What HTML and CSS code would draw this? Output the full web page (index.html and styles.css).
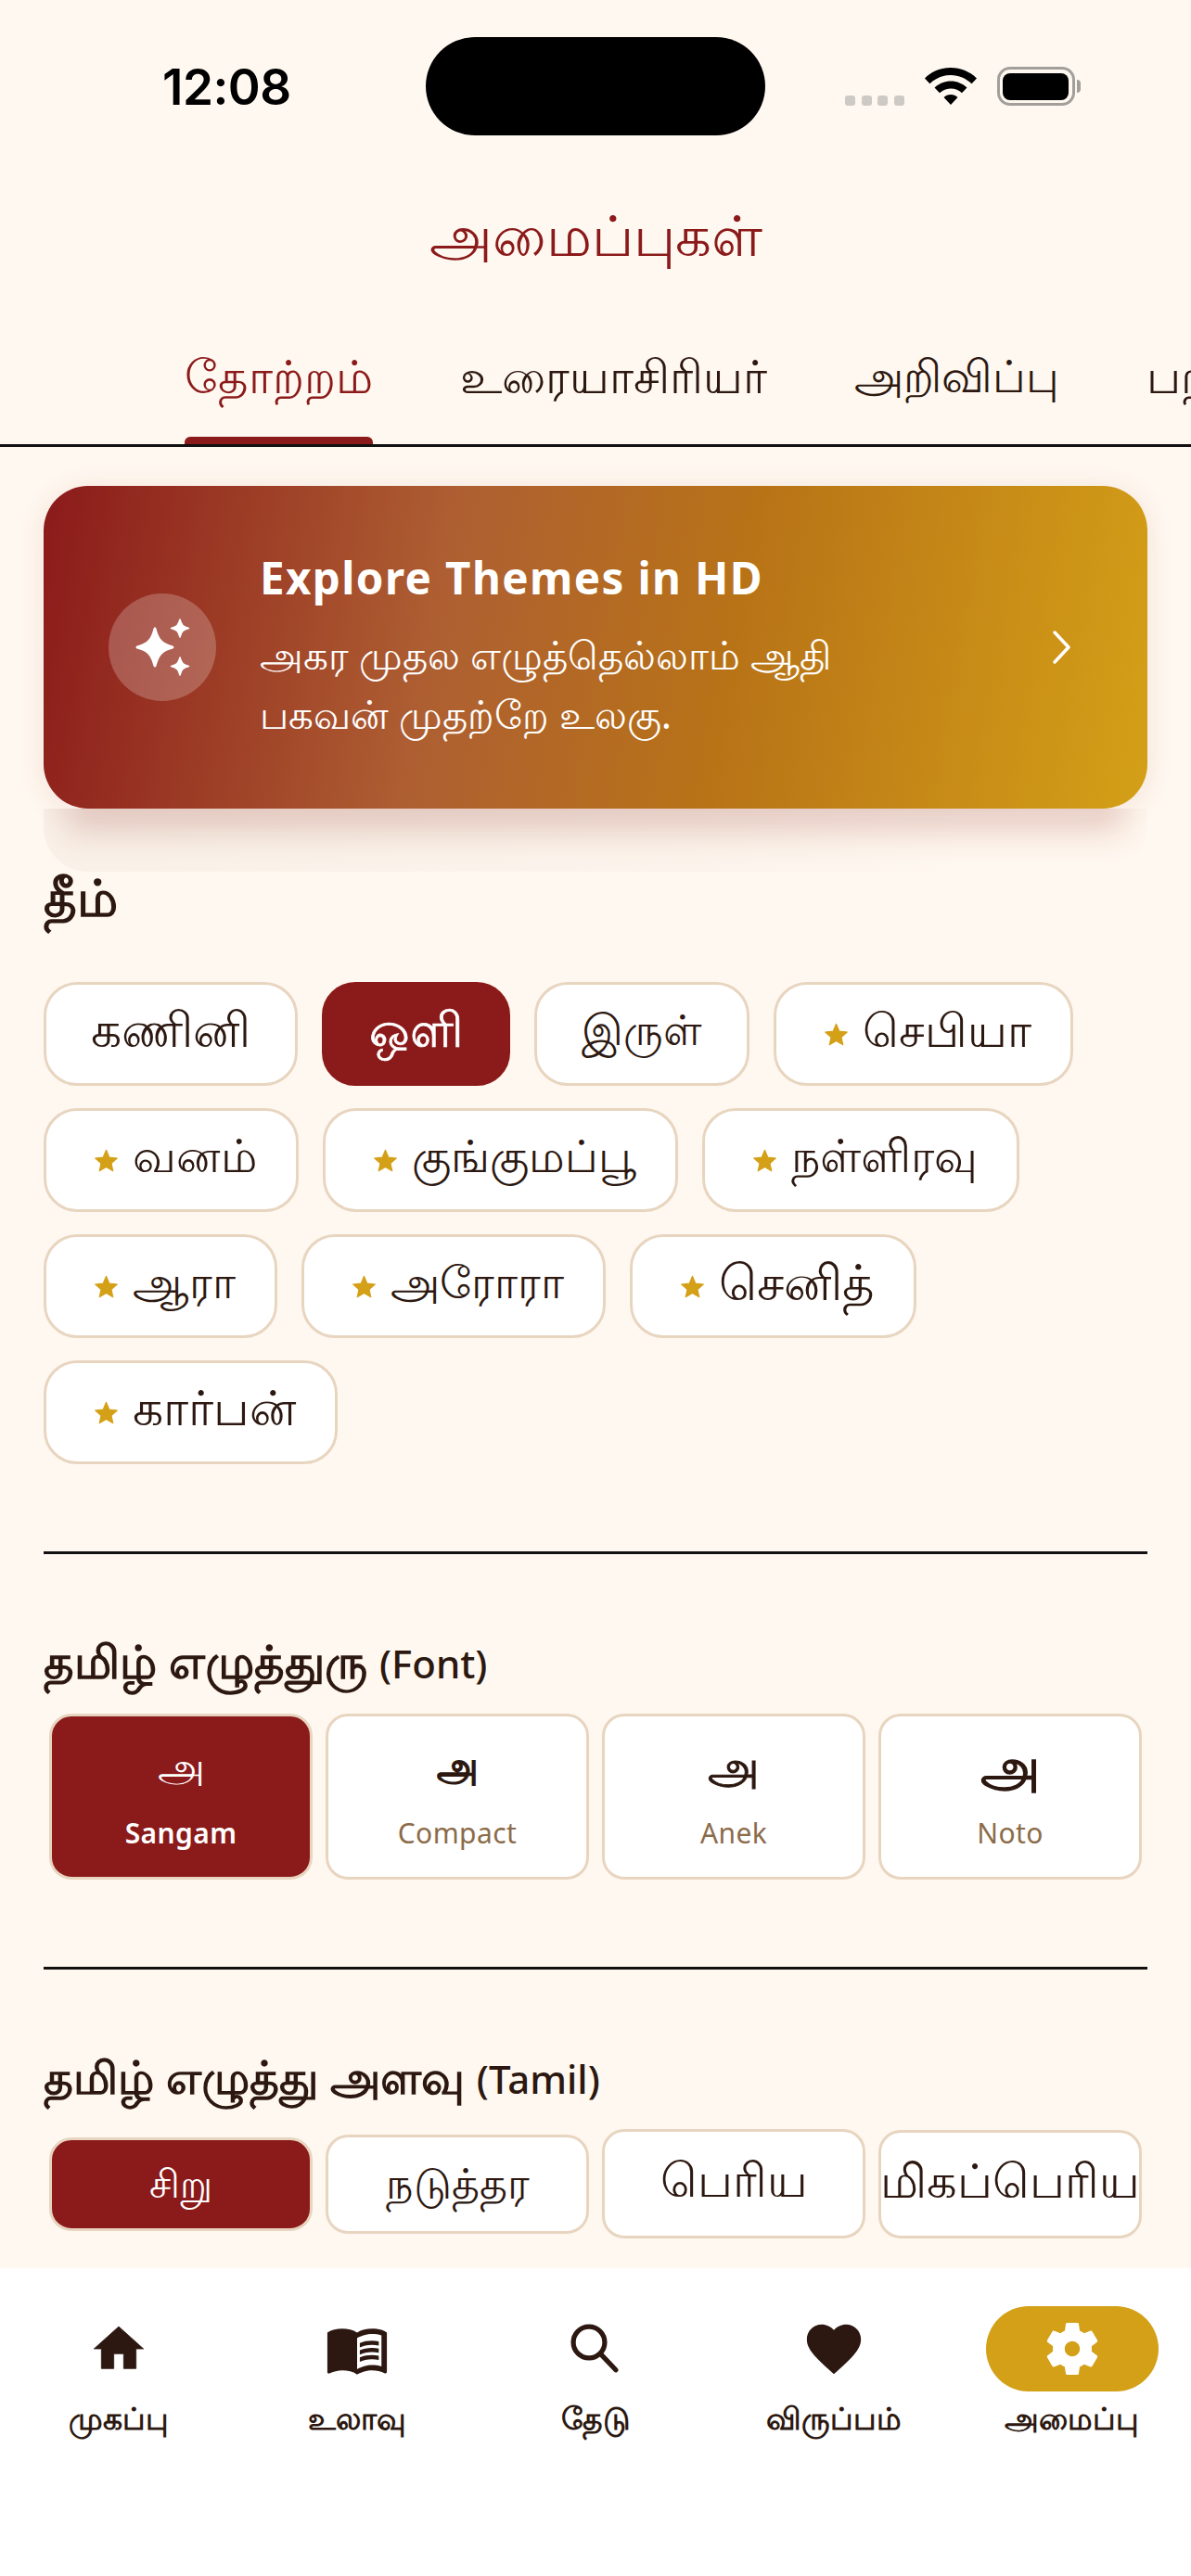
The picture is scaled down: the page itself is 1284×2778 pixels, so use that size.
FILE: index.html
```html
<!DOCTYPE html>
<html lang="ta">
<head>
<meta charset="utf-8">
<title>அமைப்புகள்</title>
<link rel="stylesheet" href="styles.css">
</head>
<body>
<svg class="defs" width="0" height="0"><symbol id="star" viewBox="0 0 24 24"><path d="M12 2l3 7 7.500.8-5.600 5 1.600 7.200L12 18.300 5.500 22l1.600-7.200-5.600-5L9 9z"/></symbol></svg>
<div class="app">
  <header class="status">
    <span class="time">12:08</span>
    <div class="island"></div>
    <div class="status-icons">
      <div class="signal"><i></i><i></i><i></i><i></i></div>
      <svg class="wifi" viewBox="0 0 56 40"><path d="M28 0C17 0 7.500 4.300 0 11.400l5.400 5.800C11.500 11.400 19.300 7.900 28 7.900s16.500 3.500 22.600 9.300l5.400-5.800C48.500 4.300 39 0 28 0zM28 14.500c-6.800 0-12.900 2.700-17.500 7l5.500 5.800c3.100-2.900 7.300-4.700 12-4.700s8.900 1.800 12 4.700l5.500-5.800c-4.600-4.300-10.700-7-17.500-7zM28 29c-3 0-5.600 1.100-7.500 2.900L28 40l7.500-8.100C33.600 30.100 31 29 28 29z"/></svg>
      <div class="battery"><div class="battery-fill"></div></div>
      <div class="battery-cap"></div>
    </div>
  </header>
  <h1 class="title">அமைப்புகள்</h1>
  <nav class="tabs">
    <a class="tab tab-active">தோற்றம்</a>
    <a class="tab">உரையாசிரியர்</a>
    <a class="tab tab-notify">அறிவிப்பு</a>
    <a class="tab">பற்றி</a>
  </nav>
  <main class="content">
    <section class="banner">
      <div class="spark-circle">
        <svg viewBox="0 0 116 116" class="spark"><path d="M50 38c3 12 7 17 19 20-12 3-16 8-19 20-3-12-7-17-19-20 12-3 16-8 19-20z" stroke-width="3"/><path d="M77 28c1.500 6 3.500 8 9.500 9.500C80.500 39 78.500 41 77 47c-1.500-6-3.500-8-9.500-9.500C73.500 36 75.500 34 77 28z" stroke-width="1.500"/><path d="M77 69c1.500 6 3.500 8 9.500 9.500C80.500 80 78.500 82 77 88c-1.500-6-3.500-8-9.500-9.500C73.500 77 75.500 75 77 69z" stroke-width="1.500"/></svg>
      </div>
      <div class="banner-text">
        <div class="banner-title">Explore Themes in HD</div>
        <div class="banner-sub">அகர முதல எழுத்தெல்லாம் ஆதி<br>பகவன் முதற்றே உலகு.</div>
      </div>
      <svg class="chevron" viewBox="0 0 24 40"><path d="M4 4l15 16L4 36"/></svg>
    </section>
    <div class="banner-ghost"></div>
    <h2 class="heading heading-theme">தீம்</h2>
    <div class="chips">
      <button class="chip">கணினி</button>
      <button class="chip chip-active">ஒளி</button>
      <button class="chip fs-46">இருள்</button>
      <button class="chip chip-star fs-49"><svg class="star"><use href="#star"/></svg>செபியா</button>
      <button class="chip chip-star fs-48"><svg class="star"><use href="#star"/></svg>வனம்</button>
      <button class="chip chip-star fs-47"><svg class="star"><use href="#star"/></svg>குங்குமப்பூ</button>
      <button class="chip chip-star fs-48"><svg class="star"><use href="#star"/></svg>நள்ளிரவு</button>
      <button class="chip chip-star fs-47"><svg class="star"><use href="#star"/></svg>ஆரா</button>
      <button class="chip chip-star fs-47"><svg class="star"><use href="#star"/></svg>அரோரா</button>
      <button class="chip chip-star fs-52"><svg class="star"><use href="#star"/></svg>செனித்</button>
      <button class="chip chip-star"><svg class="star"><use href="#star"/></svg>கார்பன்</button>
    </div>
    <hr class="divider">
    <h2 class="heading">தமிழ் எழுத்துரு <span class="latin">(Font)</span></h2>
    <div class="cards">
      <div class="card card-active"><span class="glyph glyph-sangam">அ</span><span class="card-name">Sangam</span></div>
      <div class="card"><span class="glyph glyph-compact">அ</span><span class="card-name">Compact</span></div>
      <div class="card"><span class="glyph glyph-anek">அ</span><span class="card-name">Anek</span></div>
      <div class="card"><span class="glyph glyph-noto">அ</span><span class="card-name">Noto</span></div>
    </div>
    <hr class="divider divider-2">
    <h2 class="heading heading-size">தமிழ் எழுத்து அளவு <span class="latin">(Tamil)</span></h2>
    <div class="sizes">
      <div class="size size-s size-active">சிறு</div>
      <div class="size size-m">நடுத்தர</div>
      <div class="size size-l">பெரிய</div>
      <div class="size size-xl">மிகப்பெரிய</div>
    </div>
  </main>
  <footer class="tabbar">
    <div class="tb-item">
      <div class="tb-icon"><svg class="ic-home" viewBox="0 0 24 24"><path d="M10 20v-6h4v6h5v-8h3L12 3 2 12h3v8z"/></svg></div>
      <span class="tb-label">முகப்பு</span>
    </div>
    <div class="tb-item">
      <div class="tb-icon"><svg viewBox="0 0 24 24"><path d="M21 5c-1.110-.35-2.330-.5-3.500-.5-1.950 0-4.050.4-5.500 1.500-1.450-1.100-3.550-1.500-5.500-1.500S2.450 4.900 1 6v14.650c0 .25.25.5.5.5.1 0 .15-.05.25-.05C3.100 20.450 5.050 20 6.500 20c1.950 0 4.050.4 5.500 1.500 1.350-.85 3.800-1.500 5.500-1.500 1.650 0 3.350.3 4.750 1.050.1.05.15.05.25.05.25 0 .5-.25.5-.5V6c-.6-.45-1.250-.75-2-1zm0 13.500c-1.100-.35-2.300-.5-3.500-.5-1.700 0-4.150.65-5.500 1.500V8c1.350-.85 3.800-1.500 5.500-1.500 1.200 0 2.400.15 3.500.5v11.500z"/><path d="M17.500 10.500c.88 0 1.730.09 2.500.26V9.240c-.79-.15-1.640-.24-2.500-.24-1.700 0-3.240.29-4.500.83v1.660c1.130-.64 2.700-.99 4.500-.99zM13 12.490v1.660c1.130-.64 2.700-.99 4.500-.99.88 0 1.730.09 2.500.26V11.900c-.79-.15-1.640-.24-2.500-.24-1.700 0-3.240.3-4.500.83zM17.500 14.330c-1.700 0-3.240.29-4.500.83v1.660c1.130-.64 2.700-.99 4.500-.99.88 0 1.730.09 2.500.26v-1.520c-.79-.16-1.640-.24-2.500-.24z"/></svg></div>
      <span class="tb-label">உலாவு</span>
    </div>
    <div class="tb-item">
      <div class="tb-icon"><svg class="ic-search" viewBox="0 0 24 24"><circle cx="9.600" cy="9.600" r="5.800"/><path d="M14 14l5.500 5.800"/></svg></div>
      <span class="tb-label">தேடு</span>
    </div>
    <div class="tb-item">
      <div class="tb-icon"><svg viewBox="0 0 24 24"><path d="M12 21.350l-1.450-1.320C5.400 15.360 2 12.280 2 8.500 2 5.420 4.420 3 7.500 3c1.740 0 3.410.81 4.500 2.090C13.090 3.810 14.760 3 16.500 3 19.580 3 22 5.420 22 8.500c0 3.780-3.400 6.860-8.550 11.540L12 21.350z"/></svg></div>
      <span class="tb-label">விருப்பம்</span>
    </div>
    <div class="tb-item">
      <div class="tb-icon tb-pill"><svg viewBox="0 0 24 24"><path fill-rule="evenodd" d="M19.140 12.940c.04-.3.06-.61.06-.94 0-.32-.02-.64-.07-.94l2.030-1.580c.18-.14.23-.41.12-.61l-1.920-3.320c-.12-.22-.37-.29-.59-.22l-2.390.96c-.5-.38-1.030-.7-1.620-.94l-.36-2.540c-.04-.24-.24-.41-.48-.41h-3.840c-.24 0-.43.17-.47.41l-.36 2.540c-.59.24-1.130.57-1.620.94l-2.390-.96c-.22-.08-.47 0-.59.22L2.740 8.870c-.12.21-.08.47.12.61l2.030 1.580c-.05.3-.09.63-.09.94s.02.64.07.94l-2.030 1.580c-.18.14-.23.41-.12.61l1.920 3.320c.12.22.37.29.59.22l2.390-.96c.5.38 1.030.7 1.620.94l.36 2.540c.05.24.24.41.48.41h3.840c.24 0 .44-.17.47-.41l.36-2.540c.59-.24 1.130-.56 1.620-.94l2.390.96c.22.08.47 0 .59-.22l1.920-3.320c.12-.22.07-.47-.12-.61l-2.010-1.580zM12 14.800c-1.550 0-2.800-1.250-2.800-2.800s1.250-2.800 2.800-2.800 2.800 1.250 2.800 2.800-1.250 2.800-2.800 2.800z"/></svg></div>
      <span class="tb-label">அமைப்பு</span>
    </div>
  </footer>
</div>
</body>
</html>
```
FILE: styles.css
```css
* { box-sizing: border-box; margin: 0; padding: 0; }
html, body { width: 1284px; height: 2778px; overflow: hidden; }
body { background: #FFF8F0; color: #2C1810; font-family: "Noto Sans", "Open Sans", sans-serif; }
.defs { display: block; height: 0; }
.app { width: 1284px; height: 2778px; display: flex; flex-direction: column; overflow: hidden; }

.status { height: 186px; padding: 40px 0 0 175px; display: flex; align-items: flex-start; flex-shrink: 0; }
.time { font-family: Inter, "Liberation Sans", sans-serif; font-size: 53px; font-weight: 600; line-height: 108px; color: #000; width: 284px; letter-spacing: -.5px; }
.island { width: 366px; height: 106px; border-radius: 53px; background: #000; flex-shrink: 0; }
.status-icons { display: flex; align-items: center; margin-left: 86px; height: 106px; }
.signal { display: flex; gap: 6.500px; align-self: flex-end; margin-bottom: 32px; }
.signal i { display: block; width: 11px; height: 11px; border-radius: 3px; background: #CDC9C4; }
.wifi { width: 56px; height: 40px; margin-left: 22px; fill: #000; }
.battery { width: 84px; height: 42px; margin-left: 22px; border: 3.500px solid #A29F9B; border-radius: 14px; padding: 3.500px; }
.battery-fill { width: 100%; height: 100%; background: #000; border-radius: 8px; }
.battery-cap { width: 4px; height: 14px; margin-left: 2px; border-radius: 0 4px 4px 0; background: #A29F9B; }

.title { height: 108px; padding-top: 31px; line-height: 72px; text-align: center; font-size: 61px; font-weight: 400; color: #8B1A1A; flex-shrink: 0; }
.tabs { display: flex; gap: 94px; padding-left: 199px; height: 188px; border-bottom: 3px solid #111; white-space: nowrap; flex-shrink: 0; overflow: hidden; align-items: flex-start; }
.tab { display: block; height: 185px; padding-top: 54px; line-height: 114px; font-size: 49.500px; font-weight: 400; color: #2C1810; }
.tab-notify { font-size: 47.500px; }
.tab-active { color: #8B1A1A; position: relative; }
.tab-active::after { content: ""; position: absolute; left: 0; right: 0; bottom: 0; height: 8px; background: #8B1A1A; border-radius: 6px 6px 0 0; }

.content { flex: 1; padding: 42px 47px 0; overflow: hidden; }
.banner { height: 348px; border-radius: 48px; display: flex; align-items: center; padding: 0 70px; color: #fff; background: linear-gradient(100deg, #8B1A1A 0%, #AE5F32 36%, #B87317 62%, #D4A017 100%); box-shadow: 0 4px 30px rgba(139, 26, 26, .1); position: relative; }
.spark-circle { width: 116px; height: 116px; border-radius: 50%; background: rgba(255,255,255,.22); flex-shrink: 0; margin-right: 47px; }
.spark { display: block; width: 116px; height: 116px; fill: #fff; stroke: #fff; stroke-linejoin: round; }
.banner-text { flex: 1; margin-top: -1px; }
.banner-title { font-size: 47.500px; font-weight: 700; line-height: 60px; letter-spacing: 1.400px; }
.banner-sub { font-size: 42px; line-height: 64px; margin-top: 21px; }
.chevron { width: 24px; height: 40px; fill: none; stroke: #fff; stroke-width: 3.500px; stroke-linecap: round; stroke-linejoin: round; flex-shrink: 0; margin-right: 10px; }
.banner-ghost { height: 68px; border-radius: 0 0 48px 48px; overflow: hidden; background: linear-gradient(90deg, rgba(90, 40, 20, .035), rgba(90, 40, 20, .02) 60%, rgba(90, 40, 20, 0) 85%); }
.banner-ghost::before { content: ""; display: block; height: 1px; margin: -1px 40px 0; box-shadow: 0 8px 36px 16px rgba(139, 40, 26, .2); }

.heading { font-size: 50px; font-weight: 600; line-height: 60px; height: 60px; color: #2C1810; white-space: nowrap; }
.heading-theme { margin-top: -3px; font-size: 55px; }
.heading-size { font-size: 48.500px; }
.latin { font-size: 42px; font-weight: 500; }

.chips { display: flex; flex-wrap: wrap; gap: 24px 26px; margin-top: 62px; }
.chip { height: 112px; border: 3px solid #E8D5C0; border-radius: 36px; background: #fff; padding: 0 48px 8px; font: inherit; font-size: 51.500px; color: #2C1810; display: flex; align-items: center; white-space: nowrap; }
.chip-star { padding-right: 42px; }
.fs-46 { font-size: 46px; }
.fs-47 { font-size: 47.500px; }
.fs-48 { font-size: 48.500px; }
.fs-49 { font-size: 49.500px; }
.fs-52 { font-size: 52.500px; }
.chip-active { background: #8B1A1A; border-color: #8B1A1A; color: #fff; -webkit-text-stroke: .7px #fff; }
.star { width: 27px; height: 27px; fill: #D4A017; stroke: #D4A017; stroke-width: 1px; stroke-linejoin: round; margin: 8px 15px 0 3px; flex-shrink: 0; }

.divider { border: 0; height: 3px; background: #111; margin: 94px 0 0; }
.divider + .heading { margin-top: 85px; }
.cards { display: flex; gap: 14px; padding: 0 6px; margin-top: 27px; }
.card { flex: 1; height: 179px; border: 3px solid #E8D5C0; border-radius: 24px; background: #fff; display: flex; flex-direction: column; align-items: center; padding-top: 20px; }
.card-active { background: #8B1A1A; color: #fff; }
.glyph { font-size: 46px; line-height: 66px; height: 66px; }
.glyph-compact { font-size: 40px; -webkit-text-stroke: 1.800px #2C1810; transform: scaleY(1.150); }
.glyph-anek { font-size: 50px; -webkit-text-stroke: 1px #2C1810; }
.glyph-noto { font-size: 58px; -webkit-text-stroke: 1.500px #2C1810; }
.card-name { font-size: 30px; line-height: 44px; margin-top: 18px; color: #8B6B4A; letter-spacing: .4px; }
.card-active .card-name { color: #fff; font-weight: 600; }

.divider-2 { margin-top: 94px; }
.sizes { display: flex; gap: 14px; padding: 0 6px; margin-top: 27px; align-items: center; height: 118px; }
.size { flex: 1 1 0; min-width: 0; border: 3px solid #E8D5C0; border-radius: 24px; background: #fff; display: flex; align-items: center; justify-content: center; white-space: nowrap; }
.size-s { height: 101px; font-size: 42px; }
.size-m { height: 107px; font-size: 46px; }
.size-l { height: 118px; font-size: 51px; padding-bottom: 8px; }
.size-xl { height: 117px; font-size: 51px; padding-bottom: 6px; }
.size-active { background: #8B1A1A; color: #fff; }

.tabbar { height: 332px; background: #fff; display: flex; flex-shrink: 0; padding-top: 41px; }
.tb-item { flex: 1; display: flex; flex-direction: column; align-items: center; }
.tb-icon { width: 186px; height: 92px; border-radius: 46px; display: flex; align-items: center; justify-content: center; }
.tb-icon svg { width: 70px; height: 70px; fill: #2C1810; }
.tb-icon .ic-home { width: 64px; height: 64px; stroke: #2C1810; stroke-width: .3; stroke-linejoin: round; }
.tb-icon .ic-search { fill: none; stroke: #2C1810; stroke-width: 1.800; stroke-linecap: round; }
.tb-pill { background: #D4A017; }
.tb-pill svg { fill: #fff; }
.tb-label { font-size: 32.500px; line-height: 48px; margin-top: 5px; color: #2C1810; font-weight: 600; }
```
